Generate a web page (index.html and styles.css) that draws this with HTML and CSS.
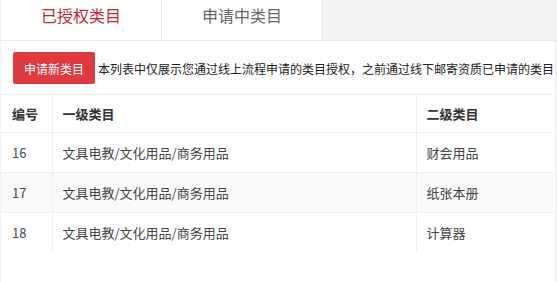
FILE: index.html
```html
<!DOCTYPE html>
<html lang="zh-CN">
<head>
<meta charset="utf-8">
<title>已授权类目</title>
<link rel="stylesheet" href="styles.css">
</head>
<body>
<div class="panel">
  <div class="tabs">
    <div class="tab active">已授权类目</div>
    <div class="tab">申请中类目</div>
  </div>
  <div class="toolbar">
    <button class="btn">申请新类目</button>
    <span class="tip">本列表中仅展示您通过线上流程申请的类目授权，之前通过线下邮寄资质已申请的类目管理请联系您的业务经理</span>
  </div>
  <table class="grid">
    <colgroup>
      <col class="c1"><col class="c2"><col class="c3">
    </colgroup>
    <thead>
      <tr><th>编号</th><th>一级类目</th><th>二级类目</th></tr>
    </thead>
    <tbody>
      <tr><td>16</td><td>文具电教/文化用品/商务用品</td><td>财会用品</td></tr>
      <tr class="alt"><td>17</td><td>文具电教/文化用品/商务用品</td><td>纸张本册</td></tr>
      <tr><td>18</td><td>文具电教/文化用品/商务用品</td><td>计算器</td></tr>
    </tbody>
  </table>
</div>
</body>
</html>
```

FILE: styles.css
```css
html, body {
  margin: 0;
  padding: 0;
  background: #fff;
}
body {
  font-family: "Noto Sans CJK SC", "Noto Sans", sans-serif;
  color: #333;
}
.panel {
  height: 282px;
  border-left: 2px solid #f2f2f2;
  border-right: 2px solid #f2f2f2;
  box-sizing: border-box;
  overflow: hidden;
  margin-left: -1px;
}
.tabs {
  display: flex;
  height: 40px;
  background: #f5f5f5;
  border-bottom: 1px solid #e8e8e8;
}
.tab {
  width: 160px;
  background: #fff;
  border-right: 1px solid #e6e6e6;
  text-align: center;
  font-size: 16px;
  line-height: 31px;
  color: #666;
}
.tab.active {
  color: #c2262c;
}
.toolbar {
  display: flex;
  align-items: center;
  padding: 11px 0 10px 12px;
  white-space: nowrap;
}
.btn {
  height: 32px;
  padding: 0 11px;
  border: none;
  border-radius: 2px;
  background: #de3a3f;
  color: #fff;
  font-family: inherit;
  font-size: 12px;
  flex: none;
}
.tip {
  margin-left: 3px;
  font-size: 12px;
  color: #222;
}
.grid {
  width: 100%;
  border-collapse: collapse;
  table-layout: fixed;
  font-size: 13px;
  margin-left: -1px;
}
.c1 { width: 52px; }
.c2 { width: 364px; }
.grid th, .grid td {
  text-align: left;
  padding: 0 10px;
  border-top: 1px solid #eee;
  border-bottom: 1px solid #eee;
  border-left: 1px solid #eee;
  height: 39px;
  color: #444;
}
.grid th {
  height: 37px;
  font-weight: bold;
  color: #333;
}
.grid th:first-child, .grid td:first-child {
  border-left: none;
  padding-left: 12px;
}
.grid tr.alt td {
  background: #f9f9f9;
}
.grid tbody tr:last-child td {
  border-bottom: none;
}
```
